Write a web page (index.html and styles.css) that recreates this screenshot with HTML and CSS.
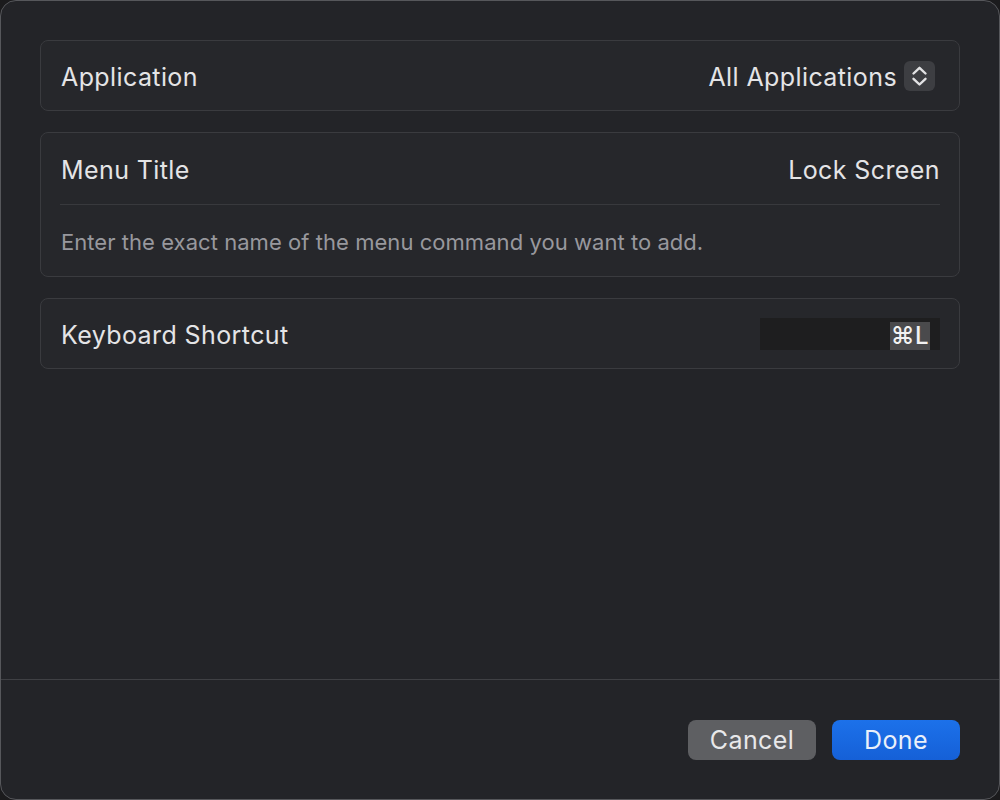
FILE: index.html
```html
<!DOCTYPE html>
<html>
<head>
<meta charset="utf-8">
<link rel="stylesheet" href="styles.css">
</head>
<body>
<div class="window">
  <div class="content">
    <div class="card">
      <div class="row row-a">
        <span class="label">Application</span>
        <span class="popup">
          <span class="value">All Applications</span>
          <span class="stepper">
            <svg width="31" height="30" viewBox="0 0 31 30">
              <path d="M9.5 12.5 L15.5 6.8 L21.5 12.5" fill="none" stroke="#e2e2e4" stroke-width="2.4" stroke-linecap="round" stroke-linejoin="round"/>
              <path d="M9.5 17.8 L15.5 23.5 L21.5 17.8" fill="none" stroke="#e2e2e4" stroke-width="2.4" stroke-linecap="round" stroke-linejoin="round"/>
            </svg>
          </span>
        </span>
      </div>
    </div>
    <div class="card">
      <div class="row row-b">
        <span class="label">Menu Title</span>
        <span class="value">Lock Screen</span>
      </div>
      <div class="divider"></div>
      <div class="row row-b">
        <span class="hint">Enter the exact name of the menu command you want to add.</span>
      </div>
    </div>
    <div class="card">
      <div class="row row-a">
        <span class="label">Keyboard Shortcut</span>
        <span class="shortcut"><span class="sel">⌘L</span></span>
      </div>
    </div>
  </div>
  <div class="footer">
    <button class="btn btn-cancel">Cancel</button>
    <button class="btn btn-done">Done</button>
  </div>
</div>
</body>
</html>
```

FILE: styles.css
```css
html, body {
  margin: 0;
  padding: 0;
  background: #1b1b1d;
}
body {
  font-family: Inter, "DejaVu Sans", sans-serif;
  color: #e4e4e6;
}
.window {
  width: 1000px;
  height: 800px;
  box-sizing: border-box;
  border: 1px solid #56575b;
  border-radius: 16px;
  background: #232428;
  display: flex;
  flex-direction: column;
  overflow: hidden;
}
.content {
  flex: 1;
  padding: 39px 39px 0 39px;
  display: flex;
  flex-direction: column;
  gap: 21px;
}
.card {
  background: #26272b;
  border: 1px solid #3a3b3f;
  border-radius: 8px;
}
.row {
  display: flex;
  align-items: center;
  justify-content: space-between;
  padding: 0 19px 0 20px;
}
.row-a { height: 69px; padding-top: 2px; box-sizing: border-box; }
.row-b { height: 71px; padding-top: 2px; box-sizing: border-box; }
.label, .value {
  font-size: 25px;
  letter-spacing: 0.4px;
  line-height: 30px;
}
.divider {
  height: 1px;
  background: #38393d;
  margin: 0 19px 0 19px;
}
.hint {
  font-size: 22px;
  color: #98989d;
  letter-spacing: 0.05px;
}
.popup {
  display: flex;
  align-items: center;
  gap: 7px;
  margin-right: 5px;
}
.stepper {
  width: 31px;
  height: 30px;
  border-radius: 6px;
  background: #3d3e42;
  display: flex;
  margin-top: -2px;
}
.shortcut {
  width: 180px;
  height: 32px;
  background: #1e1e1f;
  display: flex;
  justify-content: flex-end;
  align-items: flex-end;
  padding-right: 10px;
  box-sizing: border-box;
  margin-top: -2px;
}
.sel {
  background: #4a4a4c;
  color: #f2f2f2;
  font-size: 24px;
  font-weight: 500;
  height: 28px;
  line-height: 28px;
  padding: 0 1px;
  letter-spacing: 0.5px;
}
.footer {
  border-top: 1px solid #3f4044;
  padding: 40px 39px 39px 39px;
  display: flex;
  justify-content: flex-end;
  gap: 16px;
}
.btn {
  width: 128px;
  height: 40px;
  border: none;
  border-radius: 8px;
  font-family: Inter, "DejaVu Sans", sans-serif;
  font-size: 25px;
  letter-spacing: 0.4px;
  color: #e8e8ea;
  padding: 0;
}
.btn-cancel {
  background: #5e5f62;
}
.btn-done {
  background: linear-gradient(#1c71ea, #1560d7);
  color: #eaf0fa;
}
```
